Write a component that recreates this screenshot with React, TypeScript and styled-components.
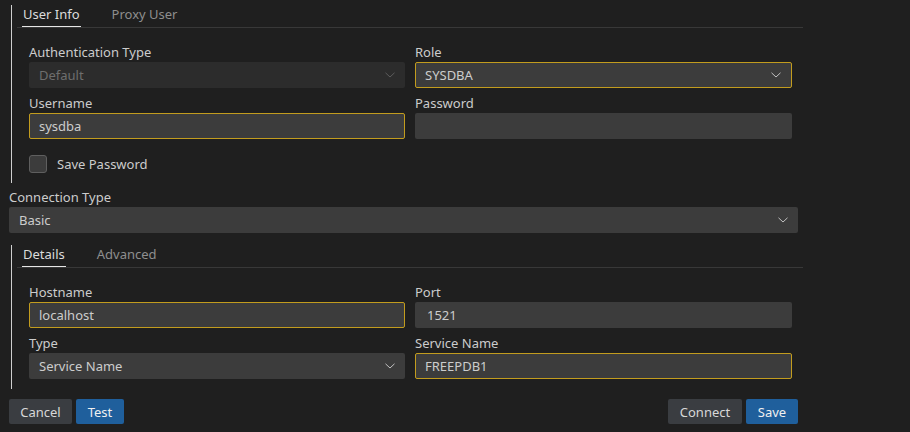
import React from "react";
import styled, { createGlobalStyle } from "styled-components";

const Global = createGlobalStyle`
  html, body { margin: 0; padding: 0; background: #1f1f1f; }
  body { font-family: "Noto Sans", "Open Sans", sans-serif; font-size: 13px; color: #cccccc; }
  * { box-sizing: border-box; }
`;

const Page = styled.div`
  width: 910px;
  height: 432px;
  padding: 5px 0 0 9px;
  display: flex;
  flex-direction: column;
`;

const Content = styled.div`
  width: 789px;
  display: flex;
  flex-direction: column;
`;

const Panel = styled.section<{ $pb: number; $mt?: number }>`
  margin-left: 2px;
  margin-right: -5px;
  margin-top: ${(p) => p.$mt ?? 0}px;
  border-left: 1px solid #cfcfcf;
  padding-bottom: ${(p) => p.$pb}px;
`;

const TabList = styled.div`
  margin-left: 5px;
  padding-left: 5px;
  display: flex;
  gap: 30px;
  border-bottom: 1px solid #383838;
`;

const Tab = styled.div<{ $active?: boolean }>`
  padding: 1px 1px 3px;
  line-height: 17px;
  color: ${(p) => (p.$active ? "#dcdcdc" : "#8e8e8e")};
  border-bottom: 1px solid ${(p) => (p.$active ? "#e6e6e6" : "transparent")};
`;

const Form = styled.div<{ $pt: number }>`
  padding: ${(p) => p.$pt}px 11px 0 17px;
  display: grid;
  grid-template-columns: 376px 377px;
  column-gap: 10px;
  row-gap: 7px;
`;

const Field = styled.div`
  display: flex;
  flex-direction: column;
`;

const Label = styled.label`
  line-height: 17px;
  margin-bottom: 1px;
  color: #cccccc;
  white-space: nowrap;
`;

const Box = styled.div<{ $focused?: boolean; $disabled?: boolean; $pl?: number; $pr?: number }>`
  height: 26px;
  display: flex;
  align-items: center;
  justify-content: space-between;
  padding: 0 ${(p) => p.$pr ?? 9}px 0 ${(p) => p.$pl ?? 9}px;
  background: ${(p) => (p.$disabled ? "#2c2c2c" : "#3c3c3c")};
  color: ${(p) => (p.$disabled ? "#6e6e6e" : "#cccccc")};
  border: 1px solid ${(p) => (p.$focused ? "#c29c1e" : "transparent")};
  border-radius: 2px;
  white-space: nowrap;
`;

const Chevron = ({ dim }: { dim?: boolean }) => (
  <svg width="10" height="6" viewBox="0 0 10 6" fill="none">
    <polyline points="0.5,0.8 5,5 9.5,0.8" stroke={dim ? "#5c5c5c" : "#c0c0c0"} strokeWidth="1" />
  </svg>
);

const CheckRow = styled.div`
  grid-column: 1 / span 2;
  margin-top: 9px;
  display: flex;
  align-items: center;
  gap: 10px;
  height: 18px;
`;

const CheckBox = styled.span`
  width: 18px;
  height: 18px;
  background: #3c3c3c;
  border: 1px solid #5f5f5f;
  border-radius: 3px;
`;

const ConnSection = styled.div`
  margin-top: 6px;
  display: flex;
  flex-direction: column;
`;

const ButtonRow = styled.div`
  margin-top: 10px;
  display: flex;
  justify-content: space-between;
`;

const ButtonGroup = styled.div`
  display: flex;
  gap: 4px;
`;

const Button = styled.button<{ $primary?: boolean; $w: number }>`
  width: ${(p) => p.$w}px;
  height: 25px;
  border: none;
  border-radius: 2px;
  font-family: inherit;
  font-size: 13px;
  padding: 0;
  color: ${(p) => (p.$primary ? "#f0f0f0" : "#d8d8d8")};
  background: ${(p) => (p.$primary ? "#1f5f9c" : "#3a3d41")};
`;

export default function App() {
  return (
    <>
      <Global />
      <Page>
        <Content>
          <Panel $pb={10}>
            <TabList>
              <Tab $active>User Info</Tab>
              <Tab>Proxy User</Tab>
            </TabList>
            <Form $pt={16}>
              <Field>
                <Label>Authentication Type</Label>
                <Box $disabled>
                  <span>Default</span>
                  <Chevron dim />
                </Box>
              </Field>
              <Field>
                <Label>Role</Label>
                <Box $focused $pr={10}>
                  <span>SYSDBA</span>
                  <Chevron />
                </Box>
              </Field>
              <Field>
                <Label>Username</Label>
                <Box $focused>
                  <span>sysdba</span>
                </Box>
              </Field>
              <Field>
                <Label>Password</Label>
                <Box />
              </Field>
              <CheckRow>
                <CheckBox />
                <span>Save Password</span>
              </CheckRow>
            </Form>
          </Panel>

          <ConnSection>
            <Label>Connection Type</Label>
            <Box>
              <span>Basic</span>
              <Chevron />
            </Box>
          </ConnSection>

          <Panel $pb={10} $mt={12}>
            <TabList>
              <Tab $active>Details</Tab>
              <Tab>Advanced</Tab>
            </TabList>
            <Form $pt={16}>
              <Field>
                <Label>Hostname</Label>
                <Box $focused>
                  <span>localhost</span>
                </Box>
              </Field>
              <Field>
                <Label>Port</Label>
                <Box $pl={11}>
                  <span>1521</span>
                </Box>
              </Field>
              <Field>
                <Label>Type</Label>
                <Box>
                  <span>Service Name</span>
                  <Chevron />
                </Box>
              </Field>
              <Field>
                <Label>Service Name</Label>
                <Box $focused>
                  <span>FREEPDB1</span>
                </Box>
              </Field>
            </Form>
          </Panel>

          <ButtonRow>
            <ButtonGroup>
              <Button $w={63}>Cancel</Button>
              <Button $primary $w={48}>Test</Button>
            </ButtonGroup>
            <ButtonGroup>
              <Button $w={74}>Connect</Button>
              <Button $primary $w={52}>Save</Button>
            </ButtonGroup>
          </ButtonRow>
        </Content>
      </Page>
    </>
  );
}
